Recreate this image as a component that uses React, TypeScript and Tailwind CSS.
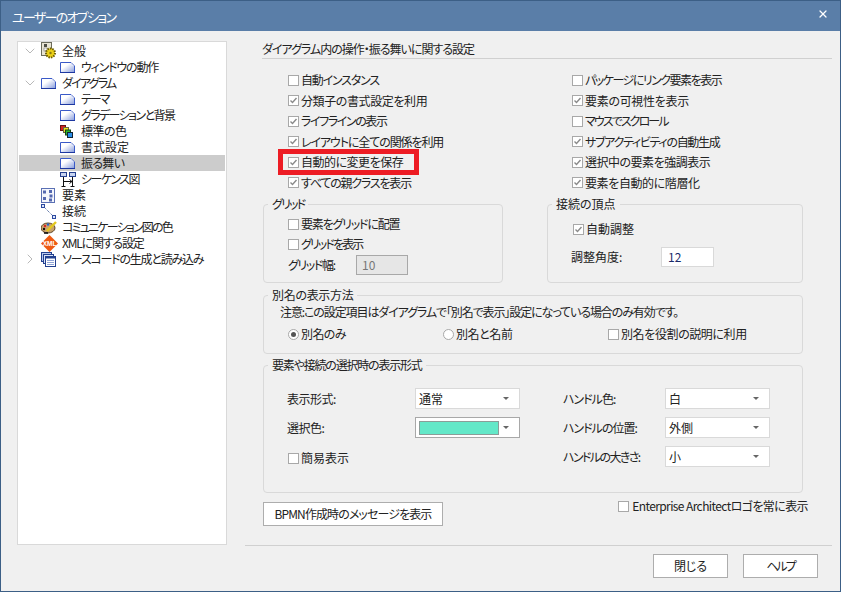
import type { ReactNode } from "react";
import { ChevronDown, ChevronRight, X } from "lucide-react";

const FONT = `font-['Noto_Sans_CJK_JP','Liberation_Sans',sans-serif]`;

function PageIcon() {
  return (
    <svg width="15" height="11" viewBox="0 0 15 11">
      <defs>
        <linearGradient id="pg" x1="0" y1="0" x2="1" y2="1">
          <stop offset="0.35" stopColor="#ffffff" />
          <stop offset="0.95" stopColor="#8fa2de" />
        </linearGradient>
      </defs>
      <path d="M0.5 0.5H11L14.5 4V10.5H0.5Z" fill="url(#pg)" stroke="#3a5ac8" />
      <path d="M11 1V4H14" fill="#dfe5f8" stroke="none" />
      <path d="M0 10.5H15" stroke="#1d37a0" />
    </svg>
  );
}

function GearIcon() {
  return (
    <svg width="16" height="18" viewBox="0 0 16 18">
      <rect x="0.5" y="0.5" width="10" height="13" fill="#e8e4d4" stroke="#6b6b5c" />
      <rect x="3" y="2" width="3" height="3" fill="#4d4d44" />
      <rect x="3" y="6" width="3" height="3" fill="#fff" stroke="#777" strokeWidth="0.6" />
      <circle cx="9.5" cy="11" r="4.5" fill="#ecd016" stroke="#6d5d00" strokeDasharray="1.5 1" strokeWidth="2" />
      <circle cx="9.5" cy="11" r="1.2" fill="#8b7a10" />
    </svg>
  );
}

function ColorsIcon() {
  return (
    <svg width="13" height="13" viewBox="0 0 13 13">
      <rect x="0.5" y="0.5" width="5" height="5" fill="#d42020" stroke="#611" />
      <rect x="3.5" y="2.5" width="5" height="5" fill="#f0e020" stroke="#664" />
      <rect x="5.5" y="5" width="5" height="5" fill="#2fb52f" stroke="#141" />
      <rect x="7.5" y="7.5" width="5" height="5" fill="#2b8fe8" stroke="#123" />
    </svg>
  );
}

function SequenceIcon() {
  return (
    <svg width="16" height="15" viewBox="0 0 16 15">
      <rect x="0.5" y="0.5" width="6" height="4" fill="#c8d4f0" stroke="#24408f" />
      <rect x="9.5" y="0.5" width="6" height="4" fill="#c8d4f0" stroke="#24408f" />
      <path d="M3.5 5V14M12.5 5V14M3 9.5H12M9.5 7.5L12 9.5L9.5 11.5M1.5 14.5H5.5M10.5 14.5H14.5" stroke="#111" fill="none" />
    </svg>
  );
}

function ElementsIcon() {
  return (
    <svg width="14" height="15" viewBox="0 0 14 15">
      <rect x="0.5" y="0.5" width="13" height="14" fill="#f4f6fc" stroke="#5a70b4" />
      <rect x="2" y="2.5" width="3" height="3" fill="#5468b0" />
      <rect x="8" y="2" width="3" height="3" fill="#5468b0" />
      <rect x="2" y="9" width="3" height="3" fill="#5468b0" />
      <rect x="8.5" y="6.5" width="3" height="3" fill="#5468b0" />
      <rect x="8" y="10.5" width="3" height="3" fill="#5468b0" />
    </svg>
  );
}

function ConnectorIcon() {
  return (
    <svg width="15" height="15" viewBox="0 0 15 15">
      <path d="M3 3L12 12" stroke="#33518f" strokeDasharray="1 1" />
      <rect x="0.5" y="0.5" width="3" height="3" fill="#dde6fa" stroke="#2d4aa0" />
      <rect x="11.5" y="11.5" width="3" height="3" fill="#dde6fa" stroke="#2d4aa0" />
    </svg>
  );
}

function PaletteIcon() {
  return (
    <svg width="16" height="15" viewBox="0 0 16 15">
      <ellipse cx="7" cy="8" rx="7" ry="5" fill="#c9a26c" stroke="#5d4526" />
      <circle cx="4" cy="6" r="1.2" fill="#d22" />
      <circle cx="7" cy="4.5" r="1.2" fill="#26c" />
      <circle cx="3" cy="9" r="1.2" fill="#111" />
      <path d="M6 11L15 2" stroke="#e4c81e" strokeWidth="2.4" />
      <path d="M3 13H7" stroke="#111" strokeWidth="1.6" />
    </svg>
  );
}

function XmlIcon() {
  return (
    <svg width="17" height="17" viewBox="0 0 17 17">
      <path d="M8.5 0L17 8.5L8.5 17L0 8.5Z" fill="#ee5a12" />
      <text x="8.5" y="11" textAnchor="middle" fontSize="6.5" fontWeight="700" fill="#fff" fontFamily="Liberation Sans">XML</text>
    </svg>
  );
}

function StackIcon() {
  return (
    <svg width="15" height="15" viewBox="0 0 15 15">
      <rect x="0.5" y="0.5" width="10" height="9" fill="#b9c8ea" stroke="#23408f" />
      <rect x="2.5" y="2.5" width="10" height="9" fill="#d9e2f6" stroke="#23408f" />
      <rect x="4.5" y="4.5" width="10" height="10" fill="#fff" stroke="#23408f" />
      <path d="M4.5 5.5H14.5" stroke="#23408f" strokeWidth="2" />
      <path d="M6 8.5H13M6 10.5H13M6 12.5H13" stroke="#8fa3d6" />
    </svg>
  );
}

const tree: { label: string; depth: number; icon: ReactNode; t?: string; arrow?: "open" | "closed"; selected?: boolean }[] = [
  { label: "全般", depth: 0, icon: <GearIcon />, arrow: "open" },
  { label: "ウィンドウの動作", depth: 1, icon: <PageIcon />, t: "tracking-[-1.2px]" },
  { label: "ダイアグラム", depth: 0, icon: <PageIcon />, arrow: "open", t: "tracking-[-1.8px]" },
  { label: "テーマ", depth: 1, icon: <PageIcon />, t: "tracking-[-2px]" },
  { label: "グラデーションと背景", depth: 1, icon: <PageIcon />, t: "tracking-[-1.6px]" },
  { label: "標準の色", depth: 1, icon: <ColorsIcon />, t: "tracking-[-0.5px]" },
  { label: "書式設定", depth: 1, icon: <PageIcon /> },
  { label: "振る舞い", depth: 1, icon: <PageIcon />, selected: true, t: "tracking-[-0.7px]" },
  { label: "シーケンス図", depth: 1, icon: <SequenceIcon />, t: "tracking-[-1.5px]" },
  { label: "要素", depth: 0, icon: <ElementsIcon /> },
  { label: "接続", depth: 0, icon: <ConnectorIcon /> },
  { label: "コミュニケーション図の色", depth: 0, icon: <PaletteIcon />, t: "tracking-[-1.8px]" },
  { label: "XMLに関する設定", depth: 0, icon: <XmlIcon />, t: "tracking-[-1.2px]" },
  { label: "ソースコードの生成と読み込み", depth: 0, icon: <StackIcon />, arrow: "closed", t: "tracking-[-1.2px]" },
];

function Check({ label, checked, t = "", gap = "gap-[2px]" }: { label: string; checked?: boolean; t?: string; gap?: string }) {
  return (
    <div className={`flex items-center whitespace-nowrap ${gap}`}>
      <span className="flex h-[11px] w-[11px] shrink-0 items-center justify-center border border-[#a8a8a8] bg-white">
        {checked && (
          <svg width="9" height="9" viewBox="0 0 9 9">
            <path d="M1.5 4.5L3.5 6.5L7.5 2" fill="none" stroke="#8a8a8a" strokeWidth="1.4" />
          </svg>
        )}
      </span>
      <span className={t}>{label}</span>
    </div>
  );
}

function Radio({ label, checked, t = "" }: { label: string; checked?: boolean; t?: string }) {
  return (
    <div className="flex items-center gap-[2px] whitespace-nowrap">
      <span className="flex h-[11px] w-[11px] shrink-0 items-center justify-center rounded-full border border-[#a8a8a8] bg-white">
        {checked && <span className="h-[5px] w-[5px] rounded-full bg-[#555]" />}
      </span>
      <span className={t}>{label}</span>
    </div>
  );
}

function Group({ title, className, t = "", children }: { title: string; className: string; t?: string; children: ReactNode }) {
  return (
    <fieldset className={`rounded-[4px] border border-[#d9d9d9] ${className}`}>
      <legend className={`ml-[4px] h-4 px-[4px] leading-4 ${t}`}>{title}</legend>
      {children}
    </fieldset>
  );
}

function Combo({ value, swatch }: { value?: string; swatch?: boolean }) {
  return (
    <div
      className={`flex h-[21px] w-[105px] items-center justify-between border bg-white pl-[3px] pr-[10px] ${
        swatch ? "border-[#a8a8a8]" : "border-[#d9d9d9]"
      }`}
    >
      {swatch ? <span className="h-[14px] w-[80px] border border-[#8c9c98] bg-[#63e8c8]" /> : <span>{value}</span>}
      <span className="h-0 w-0 border-x-[3px] border-t-[3px] border-x-transparent border-t-[#666]" />
    </div>
  );
}

function Button({ label, className, t = "" }: { label: string; className: string; t?: string }) {
  return (
    <button className={`flex h-6 items-center justify-center border border-[#adadad] bg-white ${className}`}>
      <span className={t}>{label}</span>
    </button>
  );
}

const leftChecks = [
  { label: "自動インスタンス", t: "tracking-[-1.2px]" },
  { label: "分類子の書式設定を利用", checked: true, t: "tracking-[-0.4px]" },
  { label: "ライフラインの表示", checked: true, t: "tracking-[-1.4px]" },
  { label: "レイアウトに全ての関係を利用", checked: true, t: "tracking-[-1.1px]" },
  { label: "自動的に変更を保存", checked: true, marked: true, t: "tracking-[-0.5px]" },
  { label: "すべての親クラスを表示", checked: true, t: "tracking-[-1.2px]" },
];

const rightChecks = [
  { label: "パッケージにリンク要素を表示", t: "tracking-[-1.5px]" },
  { label: "要素の可視性を表示", checked: true, t: "tracking-[-0.3px]" },
  { label: "マウスでスクロール", t: "tracking-[-1.9px]" },
  { label: "サブアクティビティの自動生成", checked: true, t: "tracking-[-1.3px]" },
  { label: "選択中の要素を強調表示", checked: true, t: "tracking-[-0.5px]" },
  { label: "要素を自動的に階層化", checked: true, t: "tracking-[-0.4px]" },
];

export default function App() {
  return (
    <div
      className={`flex h-[592px] w-[841px] flex-col overflow-hidden border border-[#3c5f86] bg-[#f0f0f0] text-[12px] leading-4 text-[#222] ${FONT} [font-feature-settings:'palt']`}
    >
      {/* title bar */}
      <div className="flex h-[30px] shrink-0 items-center justify-between bg-[#5a7ea8] pl-[11px] pr-[11px] text-white">
        <span className="pt-[2px] text-[13px] tracking-[-1.7px]">ユーザーのオプション</span>
        <X size={12} strokeWidth={2.5} className="mb-1" />
      </div>

      <div className="flex flex-1 pl-[16px] pt-[10px]">
        {/* tree */}
        <div className="h-[504px] w-[210px] shrink-0 border border-[#d9d9d9] bg-white p-[1px]">
          {tree.map((n) => (
            <div
              key={n.label}
              className={`flex h-4 items-center whitespace-nowrap ${n.selected ? "bg-[#cccccc]" : ""} ${
                n.depth === 1 ? "pl-[41px]" : "pl-[3px]"
              }`}
            >
              {n.depth === 0 && (
                <span className="flex w-[19px] justify-start text-[#a6a6a6]">
                  {n.arrow === "open" && <ChevronDown size={16} strokeWidth={1.2} />}
                  {n.arrow === "closed" && <ChevronRight size={16} strokeWidth={1.2} />}
                </span>
              )}
              <span className="flex w-[21px] shrink-0 items-center">{n.icon}</span>
              <span className={n.t}>{n.label}</span>
            </div>
          ))}
        </div>

        {/* settings */}
        <div className="ml-[18px] w-[587px]">
          <div className="ml-[17px] border-b border-[#d0d0d0] pb-[1px] tracking-[-1px]">ダイアグラム内の操作・振る舞いに関する設定</div>

          <div className="ml-[43px] mt-[11px] grid grid-flow-col grid-cols-[284px_1fr] grid-rows-6 auto-rows-[20.5px]">
            {leftChecks.map((c) => (
              <div key={c.label} className="relative flex h-[20.5px] items-center">
                <Check label={c.label} checked={c.checked} t={c.t} />
                {c.marked && <div className="absolute -left-[10px] top-[-3px] h-[26px] w-[141px] border-[5px] border-[#ed1c24]" />}
              </div>
            ))}
            {rightChecks.map((c) => (
              <div key={c.label} className="flex h-[20.5px] items-center">
                <Check label={c.label} checked={c.checked} t={c.t} />
              </div>
            ))}
          </div>

          <div className="ml-[18px] mt-[3px] flex gap-[44px]">
            <Group title="グリッド" className="h-[87px] w-[240px]" t="tracking-[-1.8px]">
              <div className="flex flex-col pl-[24px] pt-[2px]">
                <div className="flex h-[20px] items-center">
                  <Check label="要素をグリッドに配置" t="tracking-[-1.2px]" />
                </div>
                <div className="flex h-[20px] items-center">
                  <Check label="グリッドを表示" t="tracking-[-1.9px]" />
                </div>
                <div className="flex h-[21px] items-center">
                  <span className="w-[68px] tracking-[-1.4px]">グリッド幅:</span>
                  <span className="flex h-[20px] w-[52px] items-center border border-[#a8a8a8] bg-[#e6e6e6] pl-[5px] text-[#777]">10</span>
                </div>
              </div>
            </Group>
            <Group title="接続の頂点" className="h-[87px] w-[256px]">
              <div className="flex flex-col pl-[23px] pt-[7px]">
                <div className="flex h-[20px] items-center pl-[2px]">
                  <Check label="自動調整" checked />
                </div>
                <div className="mt-[7px] flex h-[21px] items-center">
                  <span className="w-[90px]">調整角度:</span>
                  <span className="flex h-[20px] w-[53px] items-center border border-[#d9d9d9] bg-white pl-[6px] text-[#1a2a6a]">12</span>
                </div>
              </div>
            </Group>
          </div>

          <Group title="別名の表示方法" className="ml-[18px] mt-[4px] h-[67px] w-[540px]" t="tracking-[-0.3px]">
            <div className="pl-[16px] pt-[1px] tracking-[-1.1px]">注意:この設定項目はダイアグラムで「別名で表示」設定になっている場合のみ有効です。</div>
            <div className="mt-[6px] flex items-center pl-[24px]">
              <span className="w-[155px]">
                <Radio label="別名のみ" checked t="tracking-[-0.6px]" />
              </span>
              <span className="w-[165px]">
                <Radio label="別名と名前" t="tracking-[-0.4px]" />
              </span>
              <Check label="別名を役割の説明に利用" t="tracking-[-0.4px]" />
            </div>
          </Group>

          <Group title="要素や接続の選択時の表示形式" className="ml-[18px] mt-[3px] h-[136px] w-[540px]" t="tracking-[-1.2px]">
            <div className="flex pl-[23px] pt-[15px]">
              <div className="flex w-[276px] flex-col gap-[8px]">
                <div className="flex items-center">
                  <span className="w-[128px] tracking-[-0.5px]">表示形式:</span>
                  <Combo value="通常" />
                </div>
                <div className="flex items-center">
                  <span className="w-[128px] tracking-[-0.5px]">選択色:</span>
                  <Combo swatch />
                </div>
                <div className="flex h-[21px] items-center pl-px pt-[3px]">
                  <Check label="簡易表示" />
                </div>
              </div>
              <div className="flex flex-col gap-[8px]">
                <div className="flex items-center">
                  <span className="w-[102px] tracking-[-1px]">ハンドル色:</span>
                  <Combo value="白" />
                </div>
                <div className="flex items-center">
                  <span className="w-[102px] tracking-[-1px]">ハンドルの位置:</span>
                  <Combo value="外側" />
                </div>
                <div className="flex items-center">
                  <span className="w-[102px] tracking-[-1.6px]">ハンドルの大きさ:</span>
                  <Combo value="小" />
                </div>
              </div>
            </div>
          </Group>

          <div className="ml-[18px] mt-[9px] flex items-start justify-between pr-[24px]">
            <Button label="BPMN作成時のメッセージを表示" className="w-[180px]" t="tracking-[-0.9px]" />
            <div className="mt-[-4px]">
              <Check label="Enterprise Architectロゴを常に表示" t="tracking-[-0.6px]" gap="gap-[3px]" />
            </div>
          </div>
        </div>
      </div>

      {/* footer */}
      <div className="ml-[244px] h-[46px] w-[587px] shrink-0 border-t border-[#d0d0d0] pt-[8px]">
        <div className="flex justify-end gap-[15px] pr-[14px]">
          <Button label="閉じる" className="w-[75px]" />
          <Button label="ヘルプ" className="w-[75px]" t="tracking-[-2px]" />
        </div>
      </div>
    </div>
  );
}
